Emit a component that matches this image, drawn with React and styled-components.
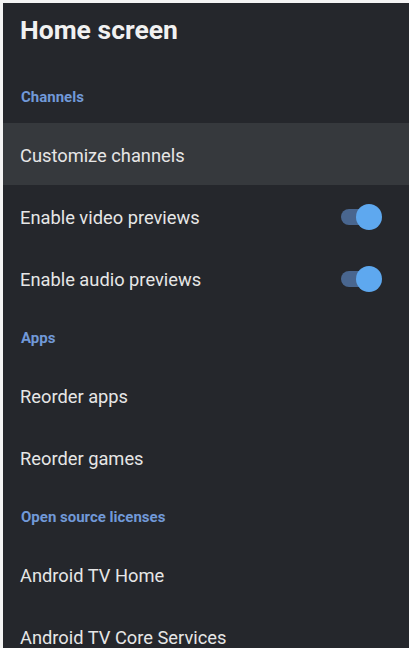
import React from 'react'
import styled, { createGlobalStyle } from 'styled-components'

const GlobalStyle = createGlobalStyle`
  html, body {
    margin: 0;
    padding: 0;
    background: #f4f4f4;
  }
  body {
    font-family: Roboto, "Noto Sans", "Liberation Sans", sans-serif;
  }
`

const Screen = styled.div`
  margin: 3px 0 0 3px;
  height: 645px;
  background: #25272c;
  display: flex;
  flex-direction: column;
  overflow: hidden;
`

const Header = styled.div`
  height: 65px;
  flex-shrink: 0;
  padding: 11px 0 0 17px;
  box-sizing: border-box;
`

const Title = styled.h1`
  margin: 0;
  font-size: 26.5px;
  line-height: 32px;
  font-weight: 700;
  color: #f1f1f1;
`

const Section = styled.div`
  height: 55px;
  flex-shrink: 0;
  display: flex;
  align-items: center;
  padding: 3px 0 0 18px;
  box-sizing: border-box;
  font-size: 15px;
  font-weight: 700;
  color: #7199d8;
`

const Row = styled.div`
  height: 62px;
  flex-shrink: 0;
  display: flex;
  align-items: center;
  justify-content: space-between;
  padding: 2px 30px 0 17px;
  box-sizing: border-box;
  background: ${p => (p.$focused ? '#36393d' : 'transparent')};
`

const Label = styled.span`
  font-size: 18.3px;
  color: #e6e6e6;
`

const Track = styled.div`
  position: relative;
  width: 38px;
  height: 16px;
  border-radius: 8px;
  background: #49668f;
`

const Thumb = styled.div`
  position: absolute;
  right: -3px;
  top: -5px;
  width: 26px;
  height: 26px;
  border-radius: 50%;
  background: #5ea8ef;
`

function Toggle() {
  return (
    <Track>
      <Thumb />
    </Track>
  )
}

const items = [
  { type: 'section', label: 'Channels' },
  { type: 'item', label: 'Customize channels', focused: true },
  { type: 'item', label: 'Enable video previews', toggle: true },
  { type: 'item', label: 'Enable audio previews', toggle: true },
  { type: 'section', label: 'Apps' },
  { type: 'item', label: 'Reorder apps' },
  { type: 'item', label: 'Reorder games' },
  { type: 'section', label: 'Open source licenses' },
  { type: 'item', label: 'Android TV Home' },
  { type: 'item', label: 'Android TV Core Services' },
]

export default function App() {
  return (
    <>
      <GlobalStyle />
      <Screen>
        <Header>
          <Title>Home screen</Title>
        </Header>
        {items.map(it =>
          it.type === 'section' ? (
            <Section key={it.label}>{it.label}</Section>
          ) : (
            <Row key={it.label} $focused={it.focused}>
              <Label>{it.label}</Label>
              {it.toggle && <Toggle />}
            </Row>
          )
        )}
      </Screen>
    </>
  )
}
